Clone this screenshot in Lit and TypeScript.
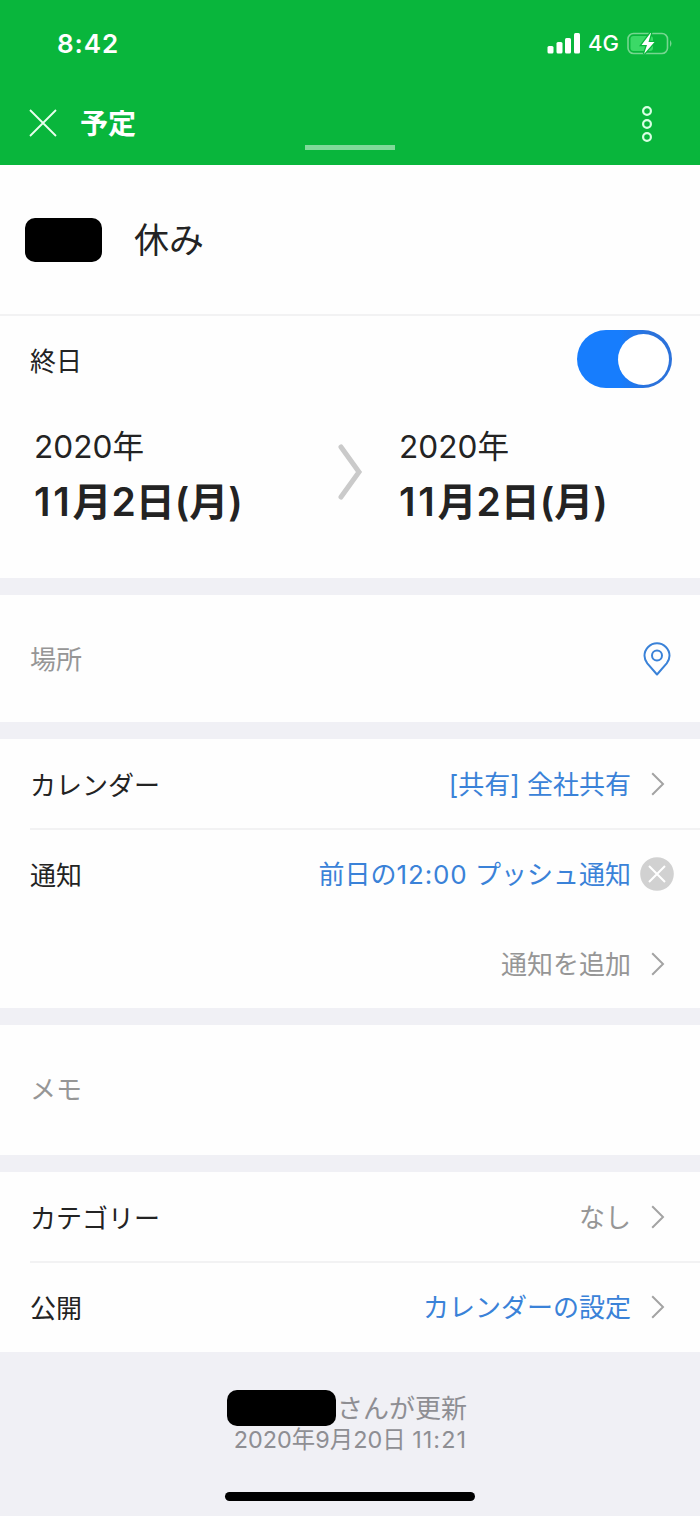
import { LitElement, html, css, svg } from "lit";
import { customElement, property } from "lit/decorators.js";

const chevron = html`<svg width="14" height="24" viewBox="0 0 14 24" fill="none" stroke="#a3a3a3" stroke-width="2">
  <path d="M1.2 1.2 12 12 1.2 22.8" />
</svg>`;

// Splits a string so that clock times and runs of ones can be spaced apart.
const spaced = (text: string) =>
  text.split(/(\d+:\d+|11)/).map((part) => (/^(\d+:\d+|11)$/.test(part) ? html`<span class="num">${part}</span>` : part));

@customElement("form-row")
class FormRow extends LitElement {
  @property() label = "";
  @property() value = "";
  @property() tone = "link";
  @property() action = "open";

  static styles = css`
    :host { display: flex; align-items: center; height: 90px; box-sizing: border-box; padding-left: 30px; font-size: 26px; line-height: 36px; color: #232323; }
    .label { flex: 1; padding-top: 4px; }
    .value { white-space: pre; padding-top: 2px; }
    .num { letter-spacing: 0.9px; }
    .link { color: #3a82d8; }
    .muted { color: #969696; }
    .action { width: 69px; display: flex; box-sizing: border-box; padding-left: 20px; }
    .clear { padding-left: 9px; }
    svg { display: block; }
  `;

  render() {
    const clear = this.action === "clear";
    return html`
      <span class="label">${this.label}</span>
      <span class="value ${this.tone}">${spaced(this.value)}</span>
      <span class="action ${clear ? "clear" : ""}">
        ${clear
          ? html`<svg width="34" height="34" viewBox="0 0 34 34" fill="none">
              <circle cx="17" cy="17" r="16.8" fill="#d1d1d1" />
              <path d="M9 9 25 25M25 9 9 25" stroke="#fff" stroke-width="2" />
            </svg>`
          : chevron}
      </span>
    `;
  }
}

@customElement("date-block")
class DateBlock extends LitElement {
  @property() year = "";
  @property() day = "";
  static styles = css`
    :host { display: block; color: #232323; white-space: nowrap; }
    .year { font-size: 31.6px; line-height: 44px; }
    .day { font-size: 39px; line-height: 56px; font-weight: 600; margin-top: 5px; }
    .num { letter-spacing: 2.7px; }
  `;
  render() {
    return html`<div class="year">${this.year}</div><div class="day">${spaced(this.day)}</div>`;
  }
}

@customElement("app-root")
class AppRoot extends LitElement {
  static styles = css`
    :host { display: flex; flex-direction: column; width: 700px; height: 1516px; background: #f0f0f5; color: #232323; font-family: Inter, "Noto Sans CJK JP", sans-serif; font-size: 26px; overflow: hidden; }
    svg { display: block; }
    header { height: 165px; background: #09b63c; color: #fff; box-sizing: border-box; display: flex; flex-direction: column; flex: none; position: relative; }
    .status { display: flex; align-items: center; height: 86px; padding: 0 27px 0 57px; }
    .time { flex: 1; font-size: 26px; font-weight: 600; letter-spacing: 0.9px; }
    .net { font-size: 22px; font-weight: 500; margin: 0 8px 0 8px; }
    .nav { display: flex; align-items: center; height: 76px; padding: 0 47px 0 29px; }
    .nav h1 { flex: 1; margin: 0 0 0 23px; font-size: 28px; line-height: 40px; font-weight: 700; }
    .nav svg:first-child { margin-top: -2px; }
    .grabber { position: absolute; left: 305px; top: 145px; width: 90px; height: 5px; background: #80da9a; }
    section { background: #fefefe; flex: none; margin-bottom: 17px; }
    .title { display: flex; align-items: center; height: 149px; border-bottom: 2px solid #f2f2f3; padding-left: 25px; font-size: 35px; }
    .title .text { padding-bottom: 4px; }
    .mask { background: #000; border-radius: 10px; }
    .title .mask { width: 77px; height: 44px; margin-right: 32px; }
    .first { height: 413px; }
    .allday { display: flex; align-items: center; justify-content: space-between; height: 86px; padding: 0 28px 0 30px; }
    .toggle { width: 95px; height: 58px; box-sizing: border-box; border-radius: 29px; padding: 3.5px; background: linear-gradient(90deg, #177dfd 45%, #2b72db 75%); display: flex; justify-content: flex-end; }
    .knob { width: 51px; height: 51px; border-radius: 50%; background: #fff; }
    .dates { display: grid; grid-template-columns: 303px 62px 1fr; padding: 23px 0 0 34px; }
    .dates svg { margin-top: 18px; }
    .field { display: flex; align-items: center; justify-content: space-between; color: #969696; padding: 0 29px 0 30px; }
    .field .text { padding-bottom: 2px; }
    .place { height: 127px; }
    .memo { height: 130px; }
    .memo .text { padding-bottom: 6px; }
    .rule { height: 2px; margin: -1px 0 -1px 30px; background: #f2f2f3; }
    .calendar { height: 269px; }
    .category { height: 180px; margin-bottom: 0; }
    footer { flex: 1; display: flex; flex-direction: column; align-items: center; color: #8e8e93; padding-top: 38px; white-space: nowrap; }
    .by { display: flex; align-items: center; height: 36px; font-size: 26px; margin-right: 6px; }
    .by .mask { width: 109px; height: 36px; margin-right: 1px; }
    .by .text { padding-bottom: 4px; }
    .when { font-size: 23.4px; line-height: 28px; }
    .when .num { letter-spacing: 1.1px; margin-right: -1px; }
    .home { width: 250px; height: 9px; border-radius: 5px; background: #000; margin-top: auto; margin-bottom: 15px; }
  `;

  render() {
    return html`
      <header>
        <div class="status">
          <span class="time">8:42</span>
          <svg width="33" height="21" viewBox="0 0 33 21" fill="#fff">
            <rect x="0.500" y="13" width="6" height="7.500" rx="1.500" />
            <rect x="9.500" y="9" width="6" height="11.500" rx="1.500" />
            <rect x="18" y="5" width="6" height="15.500" rx="1.500" />
            <rect x="27" y="0" width="6" height="20.500" rx="1.500" />
          </svg>
          <span class="net">4G</span>
          <svg width="46" height="23" viewBox="0 0 46 23" fill="none">
            <rect x="1" y="1.500" width="39.500" height="20" rx="5.500" stroke="#76d690" stroke-width="1.600" />
            <path d="M43 8q3 3.500 0 7z" fill="#76d690" />
            <rect x="3.500" y="4" width="22.500" height="15" rx="3" fill="#3bd967" />
            <path d="M23.500 1 14.500 13h5.500L17 22 27.500 10h-6L24 1z" fill="#fff" stroke="#09b63c" stroke-width="2.500" paint-order="stroke" />
          </svg>
        </div>
        <div class="nav">
          <svg width="28" height="28" viewBox="0 0 28 28" stroke="#e9ffef" stroke-width="1.800">
            <path d="M1 1 27 27M27 1 1 27" />
          </svg>
          <h1>予定</h1>
          <svg width="12" height="36" viewBox="0 0 12 36" fill="none" stroke="#d9ffe3" stroke-width="2.200">
            ${[5, 18, 31].map((y) => svg`<circle cx="6" cy=${y} r="3.900" />`)}
          </svg>
        </div>
        <div class="grabber"></div>
      </header>

      <section class="first">
        <div class="title"><span class="mask"></span><span class="text">休み</span></div>
        <div class="allday">
          <span>終日</span>
          <span class="toggle"><span class="knob"></span></span>
        </div>
        <div class="dates">
          <date-block year="2020年" day="11月2日(月)"></date-block>
          <svg width="26" height="58" viewBox="0 0 26 58" fill="none" stroke="#cacaca" stroke-width="5" stroke-linecap="round">
            <path d="M4 4 22 29 4 54" />
          </svg>
          <date-block year="2020年" day="11月2日(月)"></date-block>
        </div>
      </section>

      <section class="field place">
        <span class="text">場所</span>
        <svg width="28" height="34" viewBox="0 0 28 34" fill="none" stroke="#3a82d8" stroke-width="2">
          <path d="M14 32.500 4.300 21.300C2.500 19 1.500 16.500 1.500 13.800a12.500 12.500 0 0 1 25 0C26.500 16.500 25.500 19 23.700 21.300z" stroke-linejoin="round" />
          <circle cx="14" cy="13.500" r="5" />
        </svg>
      </section>

      <section class="calendar">
        <form-row label="カレンダー" value="[共有] 全社共有"></form-row>
        <div class="rule"></div>
        <form-row label="通知" value="前日の12:00 プッシュ通知" action="clear"></form-row>
        <form-row value="通知を追加" tone="muted"></form-row>
      </section>

      <section class="field memo"><span class="text">メモ</span></section>

      <section class="category">
        <form-row label="カテゴリー" value="なし" tone="muted"></form-row>
        <div class="rule"></div>
        <form-row label="公開" value="カレンダーの設定"></form-row>
      </section>

      <footer>
        <div class="by"><span class="mask"></span><span class="text">さんが更新</span></div>
        <div class="when">${spaced("2020年9月20日 11:21")}</div>
        <div class="home"></div>
      </footer>
    `;
  }
}
